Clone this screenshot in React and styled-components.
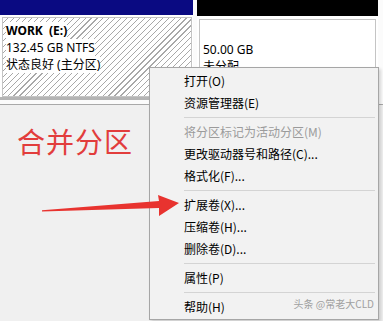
import React from 'react';
import styled, { createGlobalStyle } from 'styled-components';

const GlobalStyle = createGlobalStyle`
    html, body {
        margin: 0;
        padding: 0;
    }
    body {
        width: 383px;
        height: 321px;
        overflow: hidden;
        background: #f0f0f0;
        font-family: "Noto Sans", "Noto Sans CJK SC", sans-serif;
    }
`
const Screen = styled.div`
    position: relative;
    width: 383px;
    height: 321px;
    overflow: hidden;
    background: #f0f0f0;
`
const DiskRow = styled.div`
    display: flex;
    gap: 4px;
    height: 104px;
    padding-right: 5px;
    background: #fbfbfb;
    border-bottom: 1px solid #a9a9a9;
`
const Volume = styled.div`
    display: flex;
    flex-direction: column;
    width: ${p => p.width}px;
    height: 100px;
    background: #ffffff;
`
const VolumeHeader = styled.div`
    height: ${p => p.tall ? 16 : 15}px;
    background: ${p => p.color};
`
const VolumeBody = styled.div`
    flex: 1;
    display: flex;
    padding: ${p => p.pad};
    border-bottom: ${p => p.shade ? '3px solid #b4b4b4' : 'none'};
`
const VolumeBox = styled.div`
    flex: 1;
    border: 1px solid #c4c4c4;
    padding: 4px 3px 0;
    background: ${p => p.hatched
        ? 'repeating-linear-gradient(135deg, #ffffff 0px, #ffffff 3.4px, #a8a8a8 3.4px, #a8a8a8 4.2px)'
        : '#ffffff'};
`
const VolumeLine = styled.div`
    height: 17px;
    line-height: 17px;
    font-size: 12px;
    font-weight: ${p => p.bold ? 700 : 400};
    color: #000;
    white-space: nowrap;
    span {
        background: ${p => p.bare ? 'transparent' : '#ffffff'};
    }
`
const Note = styled.div`
    position: absolute;
    left: 17px;
    top: 124px;
    font-family: "Noto Sans CJK SC", sans-serif;
    font-size: 28px;
    line-height: 34px;
    color: #e23d3c;
    letter-spacing: 1px;
`
const Arrow = styled.svg`
    position: absolute;
    left: 38px;
    top: 192px;
`
const Menu = styled.div`
    position: absolute;
    left: 149px;
    top: 67px;
    width: 228px;
    padding: 2px 0 1px;
    background: #f2f2f2;
    border: 1px solid #a6a6a6;
    box-shadow: 2px 2px 3px rgba(0, 0, 0, 0.15);
`
const MenuItem = styled.div`
    height: 22px;
    line-height: 22px;
    padding-left: 34px;
    font-family: "Noto Sans CJK SC", sans-serif;
    font-size: 12px;
    color: ${p => p.disabled ? '#9b9b9b' : '#000000'};
    white-space: nowrap;
`
const Separator = styled.div`
    height: 7px;
    display: flex;
    align-items: center;
    padding: 0 3px 0 34px;
    &::after {
        content: "";
        flex: 1;
        height: 1px;
        background: #d4d4d4;
    }
`
const Watermark = styled.div`
    position: absolute;
    right: 4px;
    bottom: 4px;
    font-family: "Noto Sans CJK SC", sans-serif;
    font-size: 10px;
    line-height: 22px;
    color: #a0a0a0;
`

const menuItems = [
    { label: '打开(O)' },
    { label: '资源管理器(E)' },
    { sep: true },
    { label: '将分区标记为活动分区(M)', disabled: true },
    { label: '更改驱动器号和路径(C)...' },
    { label: '格式化(F)...' },
    { sep: true },
    { label: '扩展卷(X)...' },
    { label: '压缩卷(H)...' },
    { label: '删除卷(D)...' },
    { sep: true },
    { label: '属性(P)' },
    { sep: true },
    { label: '帮助(H)' },
]

export default function App() {
    return (
        <Screen>
            <GlobalStyle />
            <DiskRow>
                <Volume width={193}>
                    <VolumeHeader color="#0a0a82" />
                    <VolumeBody pad="2px 1px 0 2px" shade>
                        <VolumeBox hatched>
                            <VolumeLine bold><span>WORK&nbsp;&nbsp;(E:)</span></VolumeLine>
                            <VolumeLine><span>132.45 GB NTFS</span></VolumeLine>
                            <VolumeLine><span>状态良好 (主分区)</span></VolumeLine>
                        </VolumeBox>
                    </VolumeBody>
                </Volume>
                <Volume width={181}>
                    <VolumeHeader color="#000000" tall />
                    <VolumeBody pad="3px 2px 0 2px">
                        <VolumeBox>
                            <VolumeLine bare />
                            <VolumeLine bare>50.00 GB</VolumeLine>
                            <VolumeLine bare>未分配</VolumeLine>
                        </VolumeBox>
                    </VolumeBody>
                </Volume>
            </DiskRow>

            <Note>合并分区</Note>

            <Menu>
                {menuItems.map((item, i) =>
                    item.sep
                        ? <Separator key={i} />
                        : <MenuItem key={i} disabled={item.disabled}>{item.label}</MenuItem>
                )}
                <Watermark>头条 @常老大CLD</Watermark>
            </Menu>

            {/* annotation arrow sits on top of the menu */}
            <Arrow width="145" height="28" viewBox="0 0 145 28">
                <polygon
                    points="4,18.2 121,9 120,3 141,11 121,24 121,16 4,19.6"
                    fill="#e8332f"
                />
            </Arrow>
        </Screen>
    );
}
